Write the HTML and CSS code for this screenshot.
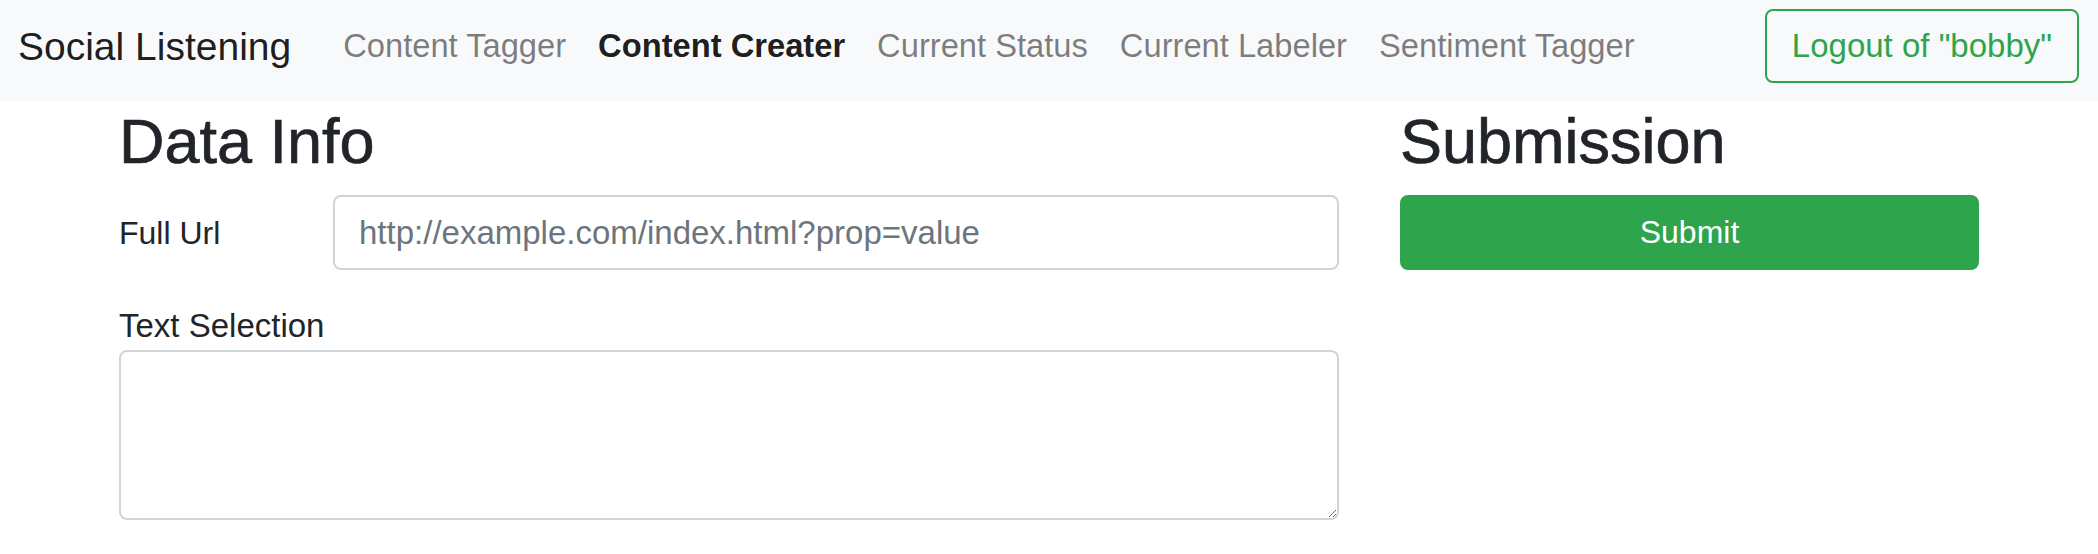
FILE: index.html
```html
<!DOCTYPE html>
<html lang="en">
<head>
<meta charset="utf-8">
<title>Social Listening</title>
<link rel="stylesheet" href="styles.css">
</head>
<body>
<nav class="navbar">
  <a class="brand" href="#">Social Listening</a>
  <ul class="nav">
    <li><a class="nav-link" href="#">Content Tagger</a></li>
    <li><a class="nav-link active" href="#">Content Creater</a></li>
    <li><a class="nav-link" href="#">Current Status</a></li>
    <li><a class="nav-link" href="#">Current Labeler</a></li>
    <li><a class="nav-link" href="#">Sentiment Tagger</a></li>
  </ul>
  <button class="btn-logout" type="button">Logout of "bobby"</button>
</nav>
<main class="container">
  <section class="col-main">
    <h2 class="heading">Data Info</h2>
    <div class="form-row">
      <label class="col-label" for="url">Full Url</label>
      <input class="form-control" id="url" type="text" placeholder="http://example.com/index.html?prop=value">
    </div>
    <div class="form-group">
      <label class="plain-label" for="sel">Text Selection</label>
      <textarea class="form-control textarea" id="sel"></textarea>
    </div>
  </section>
  <section class="col-side">
    <h2 class="heading">Submission</h2>
    <button class="btn-submit" type="button">Submit</button>
  </section>
</main>
</body>
</html>
```
FILE: styles.css
```css
* { box-sizing: border-box; }
html, body {
  margin: 0;
  padding: 0;
  background: #fff;
  font-family: "Liberation Sans", Arial, Helvetica, sans-serif;
  font-size: 33px;
  color: #212529;
}
.navbar {
  height: 101px;
  background: #f8f9fa;
  display: flex;
  align-items: center;
  padding: 0 19px 9px 18px;
}
.brand {
  font-size: 39px;
  color: rgba(0, 0, 0, 0.9);
  text-decoration: none;
  margin-right: 36px;
  padding-top: 2px;
}
.nav {
  list-style: none;
  display: flex;
  margin: 0;
  padding: 0;
}
.nav-link {
  display: block;
  padding: 0 16px;
  color: rgba(0, 0, 0, 0.5);
  text-decoration: none;
  font-size: 32.7px;
}
.nav-link.active {
  color: rgba(0, 0, 0, 0.9);
  font-weight: 700;
}
.btn-logout {
  margin-left: auto;
  height: 74px;
  padding: 0 25px;
  border: 2px solid #2ea54c;
  border-radius: 8px;
  background: transparent;
  color: #2ea54c;
  font-family: inherit;
  font-size: 33px;
}
.container {
  width: 1860px;
  margin: 2px auto 0;
  display: grid;
  grid-template-columns: 1220px 579px;
  column-gap: 61px;
}
.heading {
  font-size: 63px;
  font-weight: 400;
  line-height: 77px;
  margin: 0 0 15px;
  -webkit-text-stroke: 0.7px #212529;
}
.form-row {
  display: grid;
  grid-template-columns: 153px 1fr;
  column-gap: 61px;
  margin-bottom: 32px;
}
.col-label {
  padding-top: 14px;
  line-height: 48px;
  font-size: 32px;
}
.plain-label {
  display: block;
  line-height: 48px;
}
.form-control {
  display: block;
  width: 100%;
  height: 75px;
  padding: 0 24px;
  font-family: inherit;
  font-size: 33px;
  color: #495057;
  background: #fff;
  border: 2px solid #ced4da;
  border-radius: 8px;
  outline: none;
}
.form-control::placeholder {
  color: #6c757d;
}
.textarea {
  height: 170px;
  padding: 12px 24px;
  resize: vertical;
  line-height: 1.5;
}
.btn-submit {
  display: block;
  width: 100%;
  height: 75px;
  border: 2px solid #2ea54c;
  border-radius: 8px;
  background: #2ea54c;
  color: #fff;
  font-family: inherit;
  font-size: 32px;
}
```
